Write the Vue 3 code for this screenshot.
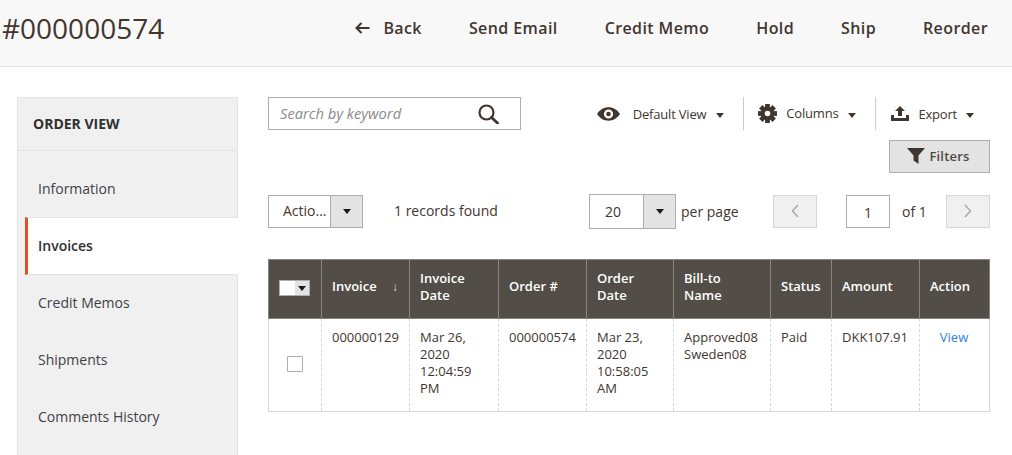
<script setup>
const acciones = ['Send Email', 'Credit Memo', 'Hold', 'Ship', 'Reorder']
const menu = [
  { nombre: 'Information' },
  { nombre: 'Invoices', activo: true },
  { nombre: 'Credit Memos' },
  { nombre: 'Shipments' },
  { nombre: 'Comments History' }
]
</script>

<template>
  <div class="pagina">
    <header class="cabecera">
      <h1 class="titulo">#000000574</h1>
      <nav class="acciones">
        <a class="accion accion-back">
          <svg width="15" height="12" viewBox="0 0 15 12"><path d="M6.500 1 1.500 6l5 5M2 6h12.500" fill="none" stroke="#41362f" stroke-width="2"/></svg>
          <span>Back</span>
        </a>
        <a v-for="a in acciones" :key="a" class="accion">{{ a }}</a>
      </nav>
    </header>

    <div class="cuerpo">
      <aside class="lateral">
        <div class="lateral-titulo">ORDER VIEW</div>
        <a v-for="m in menu" :key="m.nombre" class="lateral-item" :class="{ activo: m.activo }">{{ m.nombre }}</a>
      </aside>

      <main class="contenido">
        <div class="barra-superior">
          <div class="buscador">
            <span class="placeholder">Search by keyword</span>
            <svg width="21" height="20" viewBox="0 0 21 20"><circle cx="8.500" cy="8.500" r="7" fill="none" stroke="#41362f" stroke-width="2.200"/><path d="m13.500 13.500 6 5.500" stroke="#41362f" stroke-width="2.800" stroke-linecap="round"/></svg>
          </div>
          <div class="herramientas">
            <div class="herramienta h-vista">
              <svg width="23" height="14" viewBox="0 0 24 14"><path fill-rule="evenodd" fill="#41362f" d="M0 7C3 2.500 7 0 12 0s9 2.500 12 7c-3 4.500-7 7-12 7S3 11.500 0 7Zm12-4.800a4.800 4.800 0 1 0 0 9.600 4.800 4.800 0 0 0 0-9.600Z"/><circle cx="12" cy="7" r="2.400" fill="#41362f"/></svg>
              <span class="h-texto">Default View</span>
              <i class="flecha"></i>
            </div>
            <div class="herramienta h-columnas">
              <svg width="19" height="19" viewBox="0 0 24 24">
                <g fill="#41362f">
                  <rect x="9" y="0" width="6" height="24" />
                  <rect x="9" y="0" width="6" height="24" transform="rotate(45 12 12)" />
                  <rect x="9" y="0" width="6" height="24" transform="rotate(90 12 12)" />
                  <rect x="9" y="0" width="6" height="24" transform="rotate(135 12 12)" />
                  <circle cx="12" cy="12" r="8.500" />
                </g>
                <circle cx="12" cy="12" r="3.500" fill="#fff" />
              </svg>
              <span class="h-texto h-subido">Columns</span>
              <i class="flecha"></i>
            </div>
            <div class="herramienta h-exportar">
              <svg width="18" height="15" viewBox="0 0 18 15"><path fill="#41362f" d="M9 0l5 5h-3v5H7V5H4ZM0 9h3v3h12V9h3v6H0Z"/></svg>
              <span class="h-texto">Export</span>
              <i class="flecha"></i>
            </div>
          </div>
        </div>

        <div class="fila-filtros">
          <button class="btn-filtros">
            <svg width="18" height="16" viewBox="0 0 18 16"><path fill="#41362f" d="M0 0h18l-6.500 7.500V16l-5-3.500v-5Z"/></svg>
            <span>Filters</span>
          </button>
        </div>

        <div class="fila-paginacion">
          <div class="selector selector-acciones">
            <span class="selector-valor">Actio...</span>
            <span class="selector-btn"><i class="flecha negra"></i></span>
          </div>
          <span class="registros">1 records found</span>
          <div class="selector selector-pagina">
            <span class="selector-valor">20</span>
            <span class="selector-btn"><i class="flecha negra"></i></span>
          </div>
          <span class="por-pagina">per page</span>
          <button class="btn-pag btn-prev">
            <svg width="10" height="16" viewBox="0 0 10 16"><path d="M8 2 2.500 8 8 14" fill="none" stroke="#aaa" stroke-width="1.500"/></svg>
          </button>
          <span class="pag-actual">1</span>
          <span class="pag-total">of 1</span>
          <button class="btn-pag btn-next">
            <svg width="10" height="16" viewBox="0 0 10 16"><path d="M2 2l5.500 6L2 14" fill="none" stroke="#aaa" stroke-width="1.500"/></svg>
          </button>
        </div>

        <table class="tabla">
          <colgroup>
            <col class="c1" /><col class="c2" /><col class="c3" /><col class="c4" />
            <col class="c5" /><col class="c6" /><col class="c7" /><col class="c8" /><col class="c9" />
          </colgroup>
          <thead>
            <tr>
              <th class="col-check">
                <span class="multi"><span class="multi-caja"></span><span class="multi-btn"><i class="flecha negra"></i></span></span>
              </th>
              <th><span class="th-orden">Invoice<span class="orden">↓</span></span></th>
              <th>Invoice Date</th>
              <th>Order #</th>
              <th>Order Date</th>
              <th>Bill-to Name</th>
              <th>Status</th>
              <th>Amount</th>
              <th>Action</th>
            </tr>
          </thead>
          <tbody>
            <tr>
              <td class="col-check"><span class="check"></span></td>
              <td>000000129</td>
              <td>Mar 26, 2020 12:04:59 PM</td>
              <td>000000574</td>
              <td>Mar 23, 2020 10:58:05 AM</td>
              <td>Approved08 Sweden08</td>
              <td>Paid</td>
              <td>DKK107.91</td>
              <td class="col-accion"><a class="enlace">View</a></td>
            </tr>
          </tbody>
        </table>
      </main>
    </div>
  </div>
</template>

<style>
html, body { margin: 0; background: #fff; overflow: hidden; }
</style>

<style scoped>
.pagina {
  width: 1012px;
  height: 455px;
  overflow: hidden;
  font-family: "Open Sans", "Noto Sans", sans-serif;
  color: #41362f;
  font-size: 14px;
}
.cabecera {
  height: 66px;
  background: #f8f8f8;
  border-bottom: 1px solid #e3e3e3;
  display: flex;
  align-items: center;
  justify-content: space-between;
  padding: 0 24px 0 2px;
}
.titulo {
  margin: 0 0 10px;
  font-size: 28px;
  font-weight: 400;
  line-height: 36px;
}
.acciones {
  display: flex;
  gap: 47px;
  margin-bottom: 10px;
}
.accion {
  font-size: 16px;
  font-weight: 600;
  letter-spacing: 0.4px;
  line-height: 22px;
  color: #41362f;
}
.accion-back {
  display: flex;
  align-items: center;
  gap: 13px;
}
.cuerpo {
  display: flex;
  padding: 30px 22px 0 17px;
}
.lateral {
  width: 221px;
  flex: none;
  box-sizing: border-box;
  background: #f0f0f0;
  border: 1px solid #e3e3e3;
  border-bottom: 0;
  margin-right: 30px;
  height: 360px;
}
.lateral-titulo {
  height: 53px;
  box-sizing: border-box;
  border-bottom: 1px solid #e3e3e3;
  padding: 15px 15px 0;
  font-weight: 700;
  line-height: 22px;
  color: #303030;
}
.lateral-item {
  display: block;
  height: 57px;
  box-sizing: border-box;
  padding: 18px 20px 0;
  line-height: 20px;
  color: #403f46;
}
.lateral-item:first-of-type {
  height: 66px;
  padding-top: 28px;
}
.lateral-item.activo {
  height: 58px;
  background: #fff;
  font-weight: 600;
  color: #303030;
  margin: 0 -1px 0 7px;
  padding: 18px 10px 0;
  border-left: 3px solid #e04f1e;
  border-top: 1px solid #e3e3e3;
  border-bottom: 1px solid #e3e3e3;
}
.contenido {
  width: 722px;
  flex: none;
}
.barra-superior {
  display: flex;
  justify-content: space-between;
  height: 33px;
}
.buscador {
  width: 253px;
  height: 33px;
  box-sizing: border-box;
  border: 1px solid #adadad;
  display: flex;
  align-items: center;
  justify-content: space-between;
  padding: 0 21px 0 11px;
}
.placeholder {
  font-style: italic;
  font-size: 14.700px;
  line-height: 20px;
  margin-bottom: 2px;
  color: #8a8a8a;
}
.herramientas {
  display: flex;
  align-items: stretch;
  margin-right: 16px;
}
.herramienta {
  display: flex;
  align-items: center;
  font-size: 13px;
  color: #41362f;
}
.herramienta .flecha { margin-top: 3px; }
.h-texto { letter-spacing: -0.2px; }
.h-subido { margin-top: -2px; }
.h-vista { padding-right: 19px; border-right: 1px solid #ccc; }
.h-vista svg { margin-right: 13px; }
.h-vista .flecha { margin-left: 10px; }
.h-columnas { padding: 0 19px 0 14px; border-right: 1px solid #ccc; }
.h-columnas svg { margin-right: 9px; }
.h-columnas .flecha { margin-left: 10px; }
.h-exportar { padding-left: 15px; }
.h-exportar svg { margin-right: 9px; }
.h-exportar .flecha { margin-left: 9px; }
.flecha {
  display: inline-block;
  width: 0;
  height: 0;
  border-left: 4px solid transparent;
  border-right: 4px solid transparent;
  border-top: 5px solid #41362f;
}
.flecha.negra { border-top-color: #1a1a1a; }
.fila-filtros {
  display: flex;
  justify-content: flex-end;
  margin-top: 10px;
}
.btn-filtros {
  width: 101px;
  height: 33px;
  box-sizing: border-box;
  background: #e3e3e3;
  border: 1px solid #adadad;
  display: flex;
  align-items: center;
  justify-content: center;
  gap: 4px;
  padding: 0 2px 2px 0;
  font-family: inherit;
  font-size: 13px;
  font-weight: 600;
  letter-spacing: 0.2px;
  color: #514943;
}
.fila-paginacion {
  display: flex;
  align-items: center;
  height: 34px;
  margin-top: 21px;
}
.selector {
  height: 33px;
  box-sizing: border-box;
  border: 1px solid #adadad;
  display: flex;
}
.selector-acciones { width: 95px; }
.selector-pagina { width: 87px; height: 35px; margin-left: auto; }
.selector-valor {
  flex: 1;
  line-height: 29px;
  padding-left: 14px;
}
.selector-pagina .selector-valor { padding-left: 15px; line-height: 34px; }
.selector-btn {
  width: 31px;
  background: #e3e3e3;
  border-left: 1px solid #adadad;
  display: flex;
  align-items: center;
  justify-content: center;
}
.registros { margin: -2px 0 0 31px; }
.por-pagina { margin-left: 5px; width: 92px; }
.btn-pag {
  width: 44px;
  height: 33px;
  box-sizing: border-box;
  background: #f0f0f0;
  border: 1px solid #d6d6d6;
  padding: 0;
  display: flex;
  align-items: center;
  justify-content: center;
}
.pag-actual {
  width: 44px;
  height: 33px;
  box-sizing: border-box;
  border: 1px solid #adadad;
  margin-left: 29px;
  text-align: center;
  line-height: 33px;
}
.pag-total { margin-left: 12px; width: 44px; }
.tabla {
  margin-top: 31px;
  width: 721px;
  table-layout: fixed;
  border-collapse: collapse;
  font-size: 13px;
  line-height: 17px;
}
.c1 { width: 53px; }
.c2 { width: 88px; }
.c3 { width: 89px; }
.c4 { width: 88px; }
.c5 { width: 87px; }
.c6 { width: 97px; }
.c7 { width: 61px; }
.c8 { width: 88px; }
.c9 { width: 70px; }
.tabla th {
  background: #524d46;
  color: #fff;
  font-weight: 600;
  text-align: left;
  height: 59px;
  box-sizing: border-box;
  padding: 7px 10px 12px;
  border: 1px solid #8a837f;
}
.tabla td {
  vertical-align: top;
  height: 93px;
  box-sizing: border-box;
  padding: 10px;
  color: #41362f;
  border-left: 1px dashed #d6d6d6;
  border-right: 1px dashed #d6d6d6;
  border-bottom: 1px solid #d6d6d6;
}
.tabla td:first-child { border-left: 1px solid #d6d6d6; }
.tabla td:last-child { border-right: 1px solid #d6d6d6; }
.tabla th.col-check { padding: 0 1px 3px 0; text-align: center; }
.tabla td.col-check { padding: 0 0 2px; vertical-align: middle; }
.multi {
  display: inline-flex;
  width: 31px;
  height: 16px;
  vertical-align: middle;
  border: 1px solid #adadad;
  box-sizing: border-box;
}
.multi-caja { width: 15px; background: #fff; }
.multi-btn {
  flex: 1;
  background: #e3e3e3;
  display: flex;
  align-items: center;
  justify-content: center;
}
.th-orden { display: flex; justify-content: space-between; padding-right: 1px; }
.orden { font-size: 12px; font-weight: 400; color: #ddd; }
.check {
  display: block;
  width: 16px;
  height: 16px;
  box-sizing: border-box;
  border: 1px solid #adadad;
  border-radius: 1px;
  background: #fff;
  margin: 0 auto;
}
.tabla td.col-accion { text-align: center; padding: 10px 10px 10px 9px; }
.enlace { color: #2f7fd8; }
</style>
